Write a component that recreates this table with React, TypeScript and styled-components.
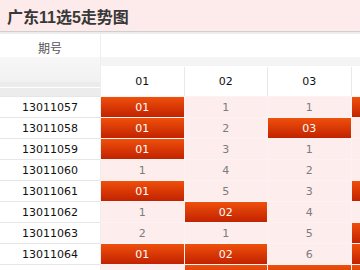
import styled, { createGlobalStyle, css } from "styled-components";

const GlobalStyle = createGlobalStyle`
    html, body {
        margin: 0;
        padding: 0;
        background: #fff;
        overflow: hidden;
    }
    body {
        font-family: "DejaVu Sans", "Noto Sans CJK SC", sans-serif;
    }
`

const Page = styled.div`
    width: 360px;
    height: 270px;
    overflow: hidden;
`

const TitleBar = styled.div`
    height: 31px;
    background: #fdeaea;
    border-bottom: 1px solid #cfcfcf;
    display: flex;
    align-items: center;
    padding-left: 7px;
`

const Title = styled.h1`
    margin: 0;
    font-family: "Liberation Sans", "Noto Sans CJK SC", sans-serif;
    font-size: 16px;
    font-weight: 700;
    color: #383838;
`

const Strip = styled.div`
    height: 2px;
    background: #ececec;
`

const Body = styled.div`
    display: flex;
    align-items: flex-start;
`

const LeftCol = styled.div`
    width: 100px;
    flex: 0 0 100px;
    border-right: 1px solid #eeeeee;
`

const IssueHead = styled.div`
    height: 23px;
    display: flex;
    align-items: center;
    justify-content: center;
    font-family: "Noto Sans CJK SC", sans-serif;
    font-size: 12px;
    color: #555;
    padding-top: 4px;
    box-sizing: border-box;
`

const IssueSpacer = styled.div`
    height: 39px;
    background: linear-gradient(
        #f7f7f7 0px,
        #f1f1f1 25px,
        #ebebeb 25px,
        #ebebeb 30px,
        #ffffff 30px,
        #ffffff 31px,
        #ececec 31px
    );
`

const IssueCell = styled.div`
    height: 20px;
    border-top: 1px solid #e6e6e6;
    display: flex;
    align-items: center;
    justify-content: center;
    font-size: 11px;
    color: #111;
`

const RightCol = styled.div`
    flex: 1;
    overflow: hidden;
`

const TopBlank = styled.div`
    height: 23px;
    background: #fff;
`

const GreyBand = styled.div`
    height: 9px;
    background: #f4f4f4;
`

const NumRow = styled.div<{ $head?: boolean }>`
    display: flex;
    width: max-content;
    border-top: 1px solid ${(p) => (p.$head ? "#ffffff" : "#fbf3f3")};
`

const HeadCell = styled.div`
    width: 82.5px;
    height: 29px;
    border-right: 1px solid #e8e8e8;
    display: flex;
    align-items: center;
    justify-content: center;
    font-size: 11px;
    color: #111;
    background: #fff;
`

const Cell = styled.div<{ $hit?: boolean }>`
    width: 82.5px;
    height: 20px;
    border-right: 1px solid #fbf3f3;
    display: flex;
    align-items: center;
    justify-content: center;
    font-size: 11px;
    background: #fdeded;
    color: #7c7c7c;
    ${(p) =>
        p.$hit &&
        css`
            background: linear-gradient(#ef500b, #c22200);
            color: #fff;
        `}
`

interface IRow {
    issue: string;
    cells: (number | null)[];
}

// null = 命中 (shows the ball number), otherwise the miss count
const rows: IRow[] = [
    { issue: "13011057", cells: [null, 1, 1, null, 3, 2, 1, 4, 5, 2, 1] },
    { issue: "13011058", cells: [null, 2, null, 1, 4, 3, 2, 5, 6, 3, 2] },
    { issue: "13011059", cells: [null, 3, 1, 2, 5, 4, 3, 6, 7, 4, 3] },
    { issue: "13011060", cells: [1, 4, 2, 3, 6, 5, 4, 7, 8, 5, 4] },
    { issue: "13011061", cells: [null, 5, 3, null, 7, 6, 5, 8, 9, 6, 5] },
    { issue: "13011062", cells: [1, null, 4, 1, 8, 7, 6, 9, 10, 7, 6] },
    { issue: "13011063", cells: [2, 1, 5, null, 9, 8, 7, 10, 11, 8, 7] },
    { issue: "13011064", cells: [null, null, 6, null, 10, 9, 8, 11, 12, 9, 8] },
    { issue: "13011065", cells: [1, null, null, null, 11, 10, 9, 12, 13, 10, 9] },
]

const balls = ["01", "02", "03", "04", "05", "06", "07", "08", "09", "10", "11"];

function App() {
    return (
        <>
            <GlobalStyle />
            <Page>
                <TitleBar>
                    <Title>广东11选5走势图</Title>
                </TitleBar>
                <Strip />
                <Body>
                    <LeftCol>
                        <IssueHead>期号</IssueHead>
                        <IssueSpacer />
                        {rows.map((row) => (
                            <IssueCell key={row.issue}>{row.issue}</IssueCell>
                        ))}
                    </LeftCol>
                    <RightCol>
                        <TopBlank />
                        <GreyBand />
                        <NumRow $head>
                            {balls.map((b) => (
                                <HeadCell key={b}>{b}</HeadCell>
                            ))}
                        </NumRow>
                        {rows.map((row) => (
                            <NumRow key={row.issue}>
                                {row.cells.map((v, i) => (
                                    <Cell key={balls[i]} $hit={v === null}>
                                        {v === null ? balls[i] : v}
                                    </Cell>
                                ))}
                            </NumRow>
                        ))}
                    </RightCol>
                </Body>
            </Page>
        </>
    )
}

export default App;
